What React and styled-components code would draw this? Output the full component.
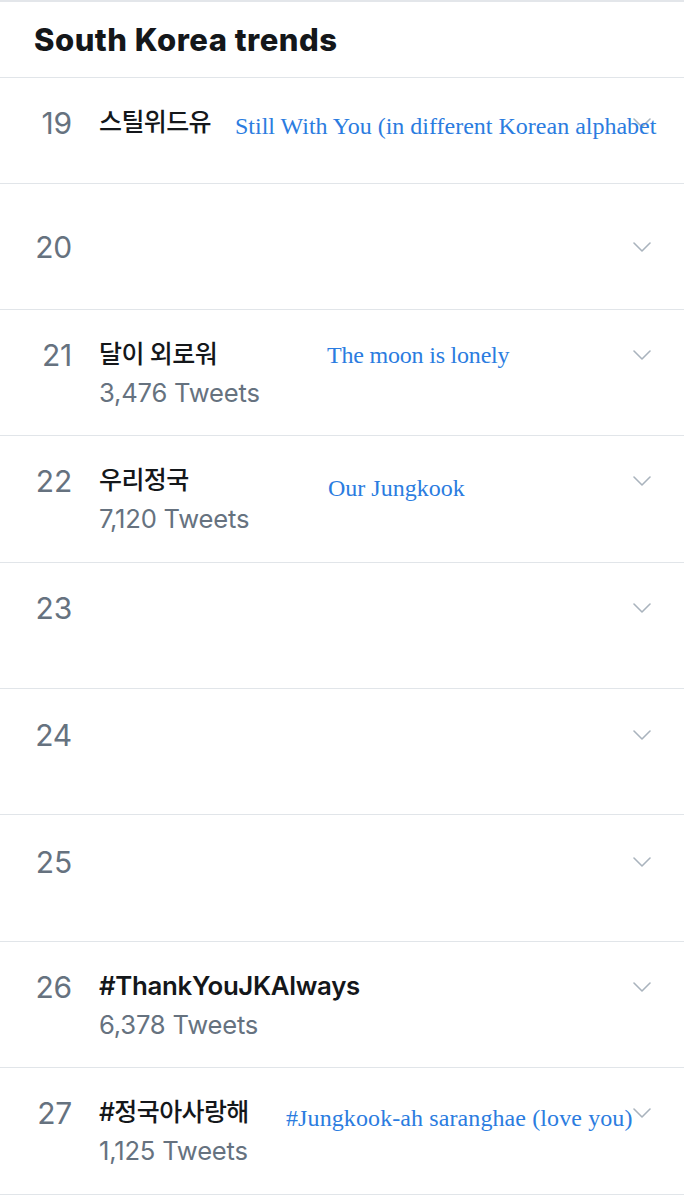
import React from "react";
import styled, { createGlobalStyle } from "styled-components";

const Global = createGlobalStyle`
  html, body { margin: 0; padding: 0; background: #ffffff; }
  body { font-family: Inter, "Noto Sans CJK KR", "Noto Sans", sans-serif; -webkit-font-smoothing: antialiased; }
`;

const Page = styled.div`
  width: 684px;
  background: #fff;
  border-top: 2px solid #e3e6ea;
`;

const Header = styled.header`
  height: 75px;
  display: flex;
  align-items: center;
  padding-left: 34px;
  border-bottom: 1px solid #e1e5e9;
`;

const Title = styled.h1`
  margin: 0;
  font-family: Inter, "Noto Sans", sans-serif;
  font-size: 31px;
  font-weight: 800;
  letter-spacing: 0.5px;
  color: #14171a;
`;

const Row = styled.div`
  position: relative;
  box-sizing: border-box;
  height: ${(p) => p.$h}px;
  padding-top: ${(p) => p.$pt}px;
  border-bottom: 1px solid #e1e5e9;
  display: grid;
  grid-template-columns: 73px 1fr 18px;
  column-gap: 26px;
  padding-right: 33px;
  align-items: start;
`;

const Rank = styled.div`
  text-align: right;
  font-family: Inter, sans-serif;
  font-size: 30px;
  line-height: 40px;
  margin-top: 1px;
  margin-right: 1px;
  color: #66727f;
  letter-spacing: -0.2px;
`;

const Body = styled.div`
  display: flex;
  flex-direction: column;
`;

const Name = styled.div`
  font-family: Inter, "Noto Sans CJK KR", sans-serif;
  font-size: ${(p) => (p.$ko ? 25 : 25.8)}px;
  font-weight: ${(p) => (p.$ko ? 500 : 600)};
  letter-spacing: ${(p) => (p.$ko ? "-0.6px" : "-0.3px")};
  line-height: 40px;
  color: #14171a;
  white-space: nowrap;
`;

const Count = styled.div`
  font-family: Inter, sans-serif;
  font-size: 25.6px;
  line-height: 38px;
  color: #66727f;
  letter-spacing: -0.2px;
`;

const Chevron = styled.svg`
  display: block;
  width: 18px;
  height: 10px;
  margin-top: ${(p) => p.$mt}px;
`;

const Note = styled.span`
  position: absolute;
  left: ${(p) => p.$x}px;
  top: ${(p) => p.$y}px;
  font-family: "Liberation Serif", "DejaVu Serif", serif;
  font-size: 24px;
  line-height: 28px;
  color: #2b7ce0;
  white-space: nowrap;
  letter-spacing: ${(p) => p.$ls || 0}px;
`;

const trends = [
  { rank: 19, name: "스틸위드유", ko: true, h: 106, pt: 24, note: { text: "Still With You (in different Korean alphabet", x: 235, y: 34, ls: 0 } },
  { rank: 20, h: 126, pt: 42 },
  { rank: 21, name: "달이 외로워", ko: true, count: "3,476 Tweets", h: 126, pt: 24, note: { text: "The moon is lonely", x: 327, y: 31, ls: -0.2 } },
  { rank: 22, name: "우리정국", ko: true, count: "7,120 Tweets", h: 127, pt: 24, note: { text: "Our Jungkook", x: 328, y: 38, ls: 0 } },
  { rank: 23, h: 126, pt: 24 },
  { rank: 24, h: 126, pt: 25 },
  { rank: 25, h: 127, pt: 26 },
  { rank: 26, name: "#ThankYouJKAlways", count: "6,378 Tweets", h: 126, pt: 24 },
  { rank: 27, name: "#정국아사랑해", ko: true, count: "1,125 Tweets", h: 127, pt: 24, note: { text: "#Jungkook-ah saranghae (love you)", x: 286, y: 36, ls: 0.1 } },
];

function ChevronIcon() {
  return (
    <Chevron $mt={16} viewBox="0 0 18 10" fill="none">
      <path d="M1 1 L9 9 L17 1" stroke="#a9b3bd" strokeWidth="1.6" strokeLinecap="round" strokeLinejoin="round" />
    </Chevron>
  );
}

export default function App() {
  return (
    <>
      <Global />
      <Page>
        <Header>
          <Title>South Korea trends</Title>
        </Header>
        {trends.map((t) => (
          <Row key={t.rank} $h={t.h} $pt={t.pt}>
            <Rank>{t.rank}</Rank>
            <Body>
              {t.name && <Name $ko={t.ko}>{t.name}</Name>}
              {t.count && <Count>{t.count}</Count>}
            </Body>
            <ChevronIcon />
            {t.note && (
              <Note $x={t.note.x} $y={t.note.y} $ls={t.note.ls}>
                {t.note.text}
              </Note>
            )}
          </Row>
        ))}
      </Page>
    </>
  );
}
